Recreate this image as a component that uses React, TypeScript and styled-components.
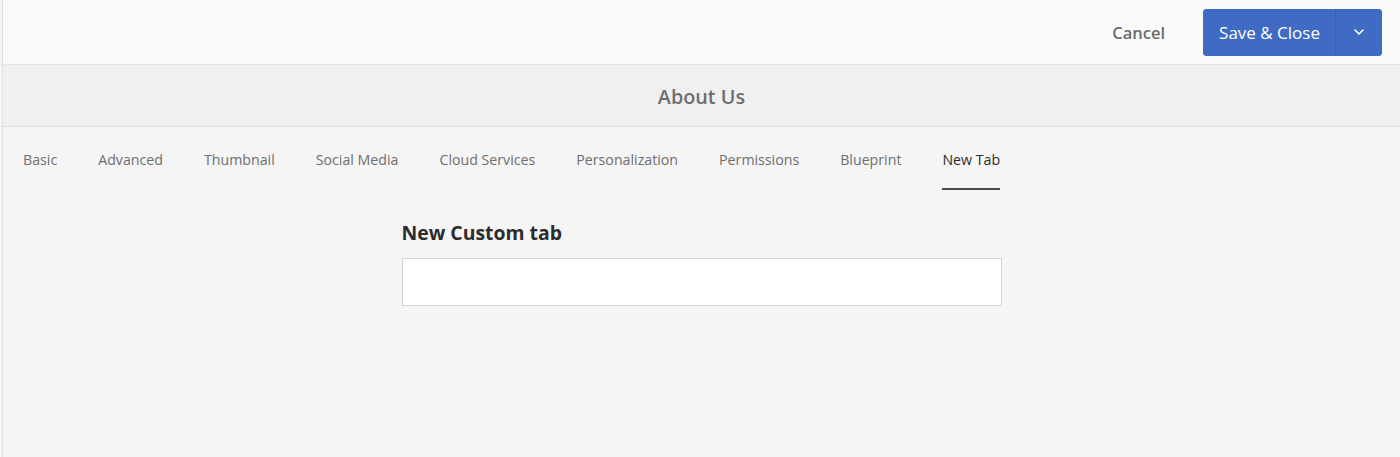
import React from 'react';
import styled, { createGlobalStyle } from 'styled-components';

const GlobalStyle = createGlobalStyle`
  html, body {
    margin: 0;
    padding: 0;
    background: #f5f5f5;
  }
  body {
    font-family: "Open Sans", "Liberation Sans", sans-serif;
  }
`;

const Page = styled.div`
  margin-left: 2px;
  border-left: 1px solid #e1e1e1;
  height: 457px;
  background: #f5f5f5;
  display: flex;
  flex-direction: column;
`;

const TopBar = styled.div`
  height: 64px;
  background: #fafafa;
  border-bottom: 1px solid #e6e6e6;
  display: flex;
  align-items: center;
  justify-content: flex-end;
  padding-right: 18px;
  gap: 38px;
`;

const CancelButton = styled.button`
  border: none;
  background: none;
  font-family: inherit;
  font-size: 16.5px;
  font-weight: 600;
  color: #6b6b6b;
  padding: 0;
  cursor: pointer;
`;

const SplitButton = styled.div`
  display: flex;
  height: 47px;
  border-radius: 4px;
  overflow: hidden;
  background: #3f6bc4;
`;

const PrimaryPart = styled.button<{ $narrow?: boolean }>`
  border: none;
  background: #3f6bc4;
  color: #ffffff;
  font-family: inherit;
  font-size: 17px;
  font-weight: 500;
  padding: ${(p) => (p.$narrow ? '0' : '0 15px 0 16px')};
  width: ${(p) => (p.$narrow ? '47px' : 'auto')};
  border-left: ${(p) => (p.$narrow ? '1px solid #3660b5' : 'none')};
  display: flex;
  align-items: center;
  justify-content: center;
  cursor: pointer;
`;

const TitleBar = styled.div`
  height: 62px;
  padding-top: 1px;
  box-sizing: border-box;
  background: #f0f0f0;
  border-bottom: 1px solid #e0e0e0;
  display: flex;
  align-items: center;
  justify-content: center;
  font-size: 19.8px;
  font-weight: 600;
  color: #6e6e6e;
`;

const Tabs = styled.nav`
  display: flex;
  gap: 41px;
  padding-left: 20px;
  height: 63px;
  align-items: stretch;
`;

const Tab = styled.div<{ $active?: boolean }>`
  display: flex;
  align-items: center;
  font-size: 14.2px;
  color: ${(p) => (p.$active ? '#2c2c2c' : '#6e6e6e')};
  position: relative;
  padding-top: 2px;
  &::after {
    content: '';
    display: ${(p) => (p.$active ? 'block' : 'none')};
    position: absolute;
    left: 0;
    right: 0;
    bottom: 0;
    height: 2px;
    background: #4b4b4b;
  }
`;

const Body = styled.div`
  display: flex;
  justify-content: center;
  padding-top: 29px;
`;

const Field = styled.div`
  width: 600px;
  display: flex;
  flex-direction: column;
  gap: 12px;
`;

const Label = styled.label`
  font-size: 19.4px;
  font-weight: 700;
  color: #2c2c2c;
`;

const Input = styled.input`
  height: 48px;
  box-sizing: border-box;
  border: 1px solid #d6d6d6;
  background: #ffffff;
  outline: none;
`;

const tabs = [
  'Basic',
  'Advanced',
  'Thumbnail',
  'Social Media',
  'Cloud Services',
  'Personalization',
  'Permissions',
  'Blueprint',
  'New Tab',
];

export default function App() {
  return (
    <>
      <GlobalStyle />
      <Page>
        <TopBar>
          <CancelButton>Cancel</CancelButton>
          <SplitButton>
            <PrimaryPart>Save &amp; Close</PrimaryPart>
            <PrimaryPart $narrow aria-label="More">
              <svg width="10" height="6" viewBox="0 0 10 6" fill="none">
                <path d="M1 1l4 4 4-4" stroke="#fff" strokeWidth="1.6" strokeLinecap="round" strokeLinejoin="round" />
              </svg>
            </PrimaryPart>
          </SplitButton>
        </TopBar>
        <TitleBar>About Us</TitleBar>
        <Tabs>
          {tabs.map((t) => (
            <Tab key={t} $active={t === 'New Tab'}>
              {t}
            </Tab>
          ))}
        </Tabs>
        <Body>
          <Field>
            <Label>New Custom tab</Label>
            <Input type="text" />
          </Field>
        </Body>
      </Page>
    </>
  );
}
